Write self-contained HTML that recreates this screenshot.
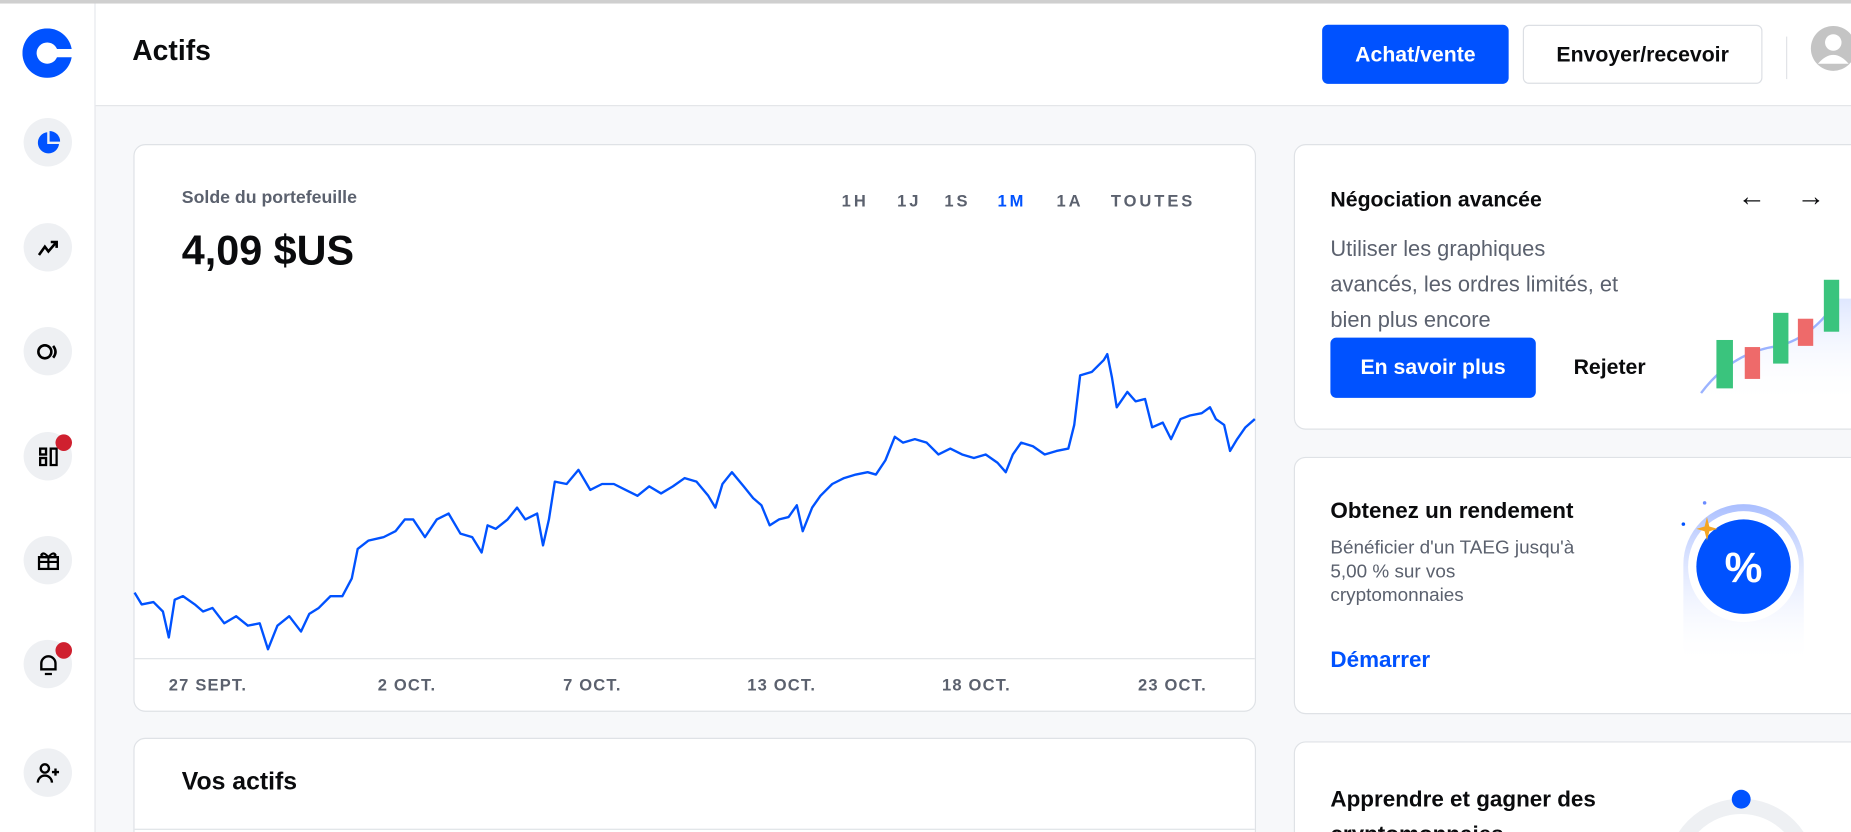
<!DOCTYPE html>
<html><head><meta charset="utf-8"><style>
*{margin:0;padding:0;box-sizing:border-box}
html,body{width:1851px;height:832px;overflow:hidden;background:#fff;font-family:"Liberation Sans",Arial,sans-serif}
#w{position:absolute;left:0;top:0;width:1568px;height:705px;transform:scale(1.18048);transform-origin:0 0;background:#f7f8fa;overflow:hidden}
.a{position:absolute}
.side{left:0;top:0;width:81px;height:705px;background:#fff;border-right:1px solid #e4e6ea}
.ic{position:absolute;left:20px;width:41px;height:41px;border-radius:50%;background:#eef0f3;display:flex;align-items:center;justify-content:center}
.dot{position:absolute;left:47px;width:14px;height:14px;border-radius:50%;background:#cf202f}
.hdr{left:81px;top:3px;width:1487px;height:87px;background:#fff;border-bottom:1px solid #e2e4e8}
.card{position:absolute;background:#fff;border:1px solid #dfe2e6;border-radius:10px;overflow:hidden}
.btn{position:absolute;border-radius:5px;font-weight:bold;font-size:18px;display:flex;align-items:center;justify-content:center}
.tr{position:absolute;top:162px;font-size:14px;font-weight:bold;color:#5b616e;letter-spacing:2.5px}
.xl{position:absolute;top:572px;font-size:14px;font-weight:bold;color:#5b616e;letter-spacing:1px}
.g{color:#5b616e;white-space:nowrap}
</style></head><body><div id="w">
<div class="a" style="left:0;top:0;width:1568px;height:3px;background:#cfcfcf;z-index:5"></div>
<div class="a side">
 <svg class="a" style="left:19px;top:24px" width="42" height="42" viewBox="0 0 42 42"><circle cx="21" cy="21" r="21" fill="#0052ff"/><circle cx="21" cy="21" r="9" fill="#fff"/><rect x="28" y="17.5" width="14" height="7" fill="#fff"/></svg>
 <div class="ic" style="top:100px"><svg width="20" height="20" viewBox="0 0 20 20"><path d="M9 1A9 9 0 1 0 19 11H9Z" fill="#0052ff"/><path d="M11 0V9H20A9 9 0 0 0 11 0Z" fill="#0052ff"/></svg></div>
 <div class="ic" style="top:189px"><svg width="18" height="14" viewBox="0 0 18 14"><path d="M1 13L6 6L9 10L15 3M11 2H16V7" stroke="#000" stroke-width="2.2" fill="none"/></svg></div>
 <div class="ic" style="top:277px"><svg width="20" height="14" viewBox="0 0 20 14"><ellipse cx="7" cy="7" rx="5.5" ry="5.5" stroke="#000" stroke-width="2.2" fill="none"/><path d="M14 2Q18 7 14 12" stroke="#000" stroke-width="2.2" fill="none"/></svg></div>
 <div class="ic" style="top:366px"><svg width="16" height="16" viewBox="0 0 16 16"><rect x="1" y="1" width="5" height="5" stroke="#000" stroke-width="2" fill="none"/><rect x="1" y="9" width="5" height="6" stroke="#000" stroke-width="2" fill="none"/><rect x="10" y="1" width="5" height="14" stroke="#000" stroke-width="2" fill="none"/></svg></div>
 <div class="dot" style="top:368px"></div>
 <div class="ic" style="top:454px"><svg width="18" height="16" viewBox="0 0 18 16"><rect x="1" y="5" width="16" height="10" stroke="#000" stroke-width="2" fill="none"/><path d="M9 5V15M1 9H17M9 5Q5 0 3 3Q3 5 9 5Q15 5 15 3Q13 0 9 5" stroke="#000" stroke-width="1.8" fill="none"/></svg></div>
 <div class="ic" style="top:542px"><svg width="16" height="18" viewBox="0 0 16 18"><path d="M2 13V8A6 6 0 0 1 14 8V13H1H15M5 17H11" stroke="#000" stroke-width="2" fill="none"/></svg></div>
 <div class="dot" style="top:544px"></div>
 <div class="ic" style="top:634px"><svg width="20" height="18" viewBox="0 0 20 18"><circle cx="7" cy="5" r="3.5" stroke="#000" stroke-width="2" fill="none"/><path d="M1 17A6 6 0 0 1 13 17M16 5V11M13 8H19" stroke="#000" stroke-width="2" fill="none"/></svg></div>
</div>
<div class="a hdr">
 <div class="a" style="left:31px;top:27px;font-size:24px;font-weight:bold;color:#0a0b0d">Actifs</div>
 <div class="btn" style="left:1039px;top:18px;width:158px;height:50px;background:#0052ff;color:#fff">Achat/vente</div>
 <div class="btn" style="left:1209px;top:18px;width:203px;height:50px;background:#fff;border:1px solid #dcdfe4;color:#0a0b0d">Envoyer/recevoir</div>
 <div class="a" style="left:1432px;top:28px;width:1px;height:36px;background:#e0e2e6"></div>
 <svg class="a" style="left:1452px;top:18px" width="40" height="40" viewBox="0 0 40 40"><circle cx="20" cy="20" r="19" fill="#c4c4c4"/><circle cx="20" cy="15" r="7" fill="#fff"/><path d="M7 33Q20 18 33 33" fill="#fff"/></svg>
</div>
<div class="card" style="left:113px;top:122px;width:951px;height:481px">
 <div class="a g" style="left:40px;top:36px;font-size:15px;font-weight:bold">Solde du portefeuille</div>
 <div class="a" style="left:40px;top:70px;font-size:35px;font-weight:bold;color:#0a0b0d">4,09 $US</div>
</div>
<div class="tr" style="left:713px">1H</div><div class="tr" style="left:760px">1J</div><div class="tr" style="left:800px">1S</div><div class="tr" style="left:845px;color:#0052ff">1M</div><div class="tr" style="left:895px">1A</div><div class="tr" style="left:941px">TOUTES</div>
<svg class="a" style="left:0;top:0" width="1568" height="705"><polyline fill="none" stroke="#0052ff" stroke-width="2" stroke-linejoin="round" points="114,502 120,512 130,510 138,518 143,540 148,508 155,505 165,512 172,518 180,515 190,528 200,522 210,530 220,528 227,550 235,530 245,522 255,535 262,520 270,515 280,505 290,505 298,490 303,465 312,458 325,455 335,450 343,440 350,440 360,455 370,440 380,435 390,452 400,455 408,468 413,445 420,448 430,440 438,430 445,440 455,435 460,462 465,440 470,408 480,410 490,398 500,415 510,410 520,410 530,415 540,420 550,412 560,418 570,412 580,405 590,408 600,420 606,430 612,410 620,400 630,412 638,422 645,428 652,445 660,440 668,438 675,428 680,450 688,430 695,420 705,410 715,405 725,402 735,400 742,402 750,390 758,370 765,375 775,372 785,375 795,385 805,380 815,385 825,388 835,385 845,392 852,400 858,385 865,375 875,378 885,385 895,382 905,380 910,360 915,318 925,315 935,305 938,300 942,320 946,345 955,332 962,340 970,338 976,362 985,358 992,372 1000,355 1008,352 1018,350 1025,345 1030,355 1037,360 1042,382 1048,372 1055,362 1063,355"/><line x1="114" y1="558" x2="1063" y2="558" stroke="#dfe2e6"/></svg>
<div class="xl" style="left:143px">27 SEPT.</div><div class="xl" style="left:320px">2 OCT.</div><div class="xl" style="left:477px">7 OCT.</div><div class="xl" style="left:633px">13 OCT.</div><div class="xl" style="left:798px">18 OCT.</div><div class="xl" style="left:964px">23 OCT.</div>
<div class="card" style="left:113px;top:625px;width:951px;height:120px">
 <div class="a" style="left:40px;top:25px;font-size:21px;font-weight:bold;color:#0a0b0d">Vos actifs</div>
 <div class="a" style="left:0;top:76px;width:951px;height:1px;background:#dfe2e6"></div>
</div>
<div class="card" style="left:1096px;top:122px;width:500px;height:242px">
 <div class="a" style="left:30px;top:36px;font-size:18px;font-weight:bold;color:#0a0b0d">Négociation avancée</div>
 <div class="a" style="left:375px;top:30px;font-size:24px;color:#0a0b0d">←</div>
 <div class="a" style="left:425px;top:30px;font-size:24px;color:#0a0b0d">→</div>
 <div class="a g" style="left:30px;top:73px;font-size:18.5px;line-height:30px">Utiliser les graphiques<br>avancés, les ordres limités, et<br>bien plus encore</div>
 <div class="btn" style="left:30px;top:163px;width:174px;height:51px;background:#0052ff;color:#fff">En savoir plus</div>
 <div class="a" style="left:236px;top:178px;font-size:18px;font-weight:bold;color:#0a0b0d">Rejeter</div>
 <svg class="a" style="left:330px;top:110px" width="150" height="110" viewBox="0 0 150 110"><defs><linearGradient id="f" x1="0" y1="0" x2="0" y2="1"><stop offset="0" stop-color="#dfe7ff"/><stop offset="1" stop-color="#fff" stop-opacity="0"/></linearGradient></defs><path d="M14 100Q40 65 80 60Q110 52 130 20L150 20L150 110L14 110Z" fill="url(#f)"/><path d="M14 100Q40 65 80 60Q110 52 130 20" stroke="#9bb3ff" stroke-width="2" fill="none"/><rect x="27" y="55" width="14" height="41" fill="#3ac47d"/><rect x="51" y="61" width="13" height="27" fill="#ee6a6a"/><rect x="75" y="32" width="13" height="43" fill="#3ac47d"/><rect x="96" y="37" width="13" height="23" fill="#ee6a6a"/><rect x="118" y="4" width="13" height="44" fill="#3ac47d"/></svg>
</div>
<div class="card" style="left:1096px;top:387px;width:500px;height:218px">
 <div class="a" style="left:30px;top:35px;font-size:19px;font-weight:bold;color:#0a0b0d">Obtenez un rendement</div>
 <div class="a g" style="left:30px;top:67px;font-size:16px;line-height:20px">Bénéficier d'un TAEG jusqu'à<br>5,00 % sur vos<br>cryptomonnaies</div>
 <div class="a" style="left:30px;top:161px;font-size:19px;font-weight:bold;color:#0052ff">Démarrer</div>
 <svg class="a" style="left:325px;top:30px" width="110" height="150" viewBox="0 0 110 150"><defs><linearGradient id="h" x1="0" y1="0" x2="0" y2="1"><stop offset="0" stop-color="#a9beff"/><stop offset="1" stop-color="#fff" stop-opacity="0"/></linearGradient></defs><path d="M4 60A51 51 0 0 1 106 60V145H4Z" fill="url(#h)"/><circle cx="55" cy="62" r="47" fill="#fff"/><circle cx="55" cy="62" r="40" fill="#0052ff"/><text x="55" y="75" text-anchor="middle" fill="#fff" font-size="36" font-weight="bold" font-family="Liberation Sans">%</text><path d="M24 20L26 28L33 30L26 32L24 40L22 32L15 30L22 28Z" fill="#f5a623"/><circle cx="4" cy="26" r="1.5" fill="#0052ff"/><circle cx="22" cy="8" r="1.5" fill="#6b8cff"/></svg>
</div>
<div class="card" style="left:1096px;top:628px;width:500px;height:120px">
 <div class="a" style="left:30px;top:34px;font-size:19px;font-weight:bold;color:#0a0b0d;line-height:30px;width:260px">Apprendre et gagner des cryptomonnaies</div>
 <svg class="a" style="left:300px;top:36px" width="140" height="100"><circle cx="78" cy="75" r="57" stroke="#eef0f3" stroke-width="13" fill="none"/><circle cx="78" cy="12" r="8" fill="#0052ff"/></svg>
</div>
</div></body></html>
